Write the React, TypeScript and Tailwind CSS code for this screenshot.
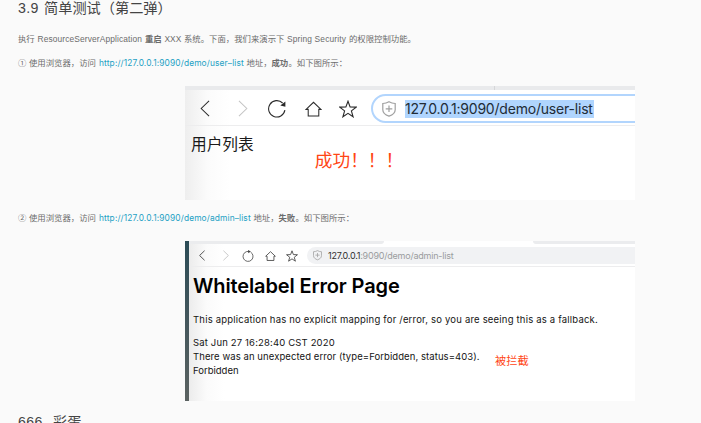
import type { ReactNode } from "react";

const ui = "font-['Inter','Noto_Sans_CJK_SC',sans-serif]";
const prose = "font-['Liberation_Sans','Noto_Sans_CJK_SC',sans-serif]";

function Seg({ className, children }: { className: string; children: ReactNode }) {
  return <span className={`block shrink-0 whitespace-nowrap ${className}`}>{children}</span>;
}

function Back({ className }: { className: string }) {
  return (
    <svg viewBox="0 0 10 18" className={`shrink-0 ${className}`} fill="none" stroke="currentColor" strokeWidth="1.1">
      <path d="M9.3 1 1 9l8.3 8" />
    </svg>
  );
}

function Forward({ className }: { className: string }) {
  return (
    <svg viewBox="0 0 10 18" className={`shrink-0 ${className}`} fill="none" stroke="currentColor" strokeWidth="1.1">
      <path d="M.7 1 9 9 .7 17" />
    </svg>
  );
}

function Reload({ className }: { className: string }) {
  return (
    <svg viewBox="0 0 18 18" className={`shrink-0 ${className}`} fill="none" stroke="currentColor" strokeWidth="1.1">
      <path d="M16.9 10.2A8.2 8.2 0 1 1 14.6 3" />
      <path d="M17.4 1.6v5.2l-5.1-1.3z" fill="currentColor" stroke="none" />
    </svg>
  );
}

function ReloadSmall({ className }: { className: string }) {
  return (
    <svg viewBox="0 0 12 12" className={`shrink-0 ${className}`} fill="none" stroke="currentColor" strokeWidth="0.8">
      <path d="M8.600 2.100A5 5 0 1 1 4.600 1.600L7 1.400" />
      <path d="M6 0 8.800 1.500 6.300 3.300z" fill="currentColor" stroke="none" />
    </svg>
  );
}

function Home({ className }: { className: string }) {
  return (
    <svg viewBox="0 0 18 16" className={`shrink-0 ${className}`} fill="none" stroke="currentColor" strokeWidth="1.1">
      <path d="M3.4 8.4H1.1L9 .9l7.9 7.5h-2.3v6.9H3.4z" />
    </svg>
  );
}

function Star({ className }: { className: string }) {
  return (
    <svg viewBox="0 0 18 18" className={`shrink-0 ${className}`} fill="none" stroke="currentColor" strokeWidth="1.1">
      <path d="M9 1.2 11.1 6.900 17.200 7.100 12.400 10.900 14.100 16.800 9 13.300 3.900 16.800 5.600 10.900.8 7.100 6.900 6.900z" />
    </svg>
  );
}

function Shield({ className }: { className: string }) {
  return (
    <svg viewBox="0 0 14 16" className={`shrink-0 ${className}`} fill="none" stroke="currentColor" strokeWidth="1.2">
      <path d="M7 .8c2 1.2 4 1.7 6.2 1.7v6.2c0 3.400-3 5.300-6.200 6.400C3.800 14 .8 12.100.8 8.700V2.500C3 2.500 5 2 7 .8z" />
      <path d="M7 4.500v6.500M3.700 7.800h6.600" />
    </svg>
  );
}

function SuccessShot() {
  return (
    <div className={`ml-[167px] flex h-[114px] w-[450px] flex-col overflow-hidden bg-white bg-linear-to-r from-[#eeeeee] via-[#fbfbfb] via-5% to-white to-10% ${ui}`}>
      <div className="flex h-1 shrink-0 bg-[#e9eaec]">
        <div className="ml-[309px] w-px bg-[#d5d6d8]" />
      </div>
      <div className="flex h-[36px] shrink-0 items-center border-b border-[#ededee] pt-[2px] text-[#2b2b2b]">
        <Back className="ml-[15px] h-[17px] w-[10px]" />
        <Forward className="ml-[28px] h-[17px] w-[10px] text-[#c4c4c4]" />
        <Reload className="ml-[20px] h-[18px] w-[18px]" />
        <Home className="ml-[19px] h-[16px] w-[17px]" />
        <Star className="ml-[17px] h-[18px] w-[18px]" />
        <div className="ml-[14px] flex h-[29px] w-[280px] shrink-0 items-center rounded-l-full border-2 border-[#b2d5fd] pl-[9px]">
          <Shield className="h-[16px] w-[14px] text-[#a0a0a0]" />
          <Seg className="ml-[9px] h-[18px] w-[188.500px] bg-[#b0d5fe] text-[14px] leading-[18px] tracking-[-0.200px] text-[#222c36]">
            127.0.0.1:9090/demo/user-list
          </Seg>
        </div>
      </div>
      <div className="flex">
        <Seg className="ml-[6px] mt-[8px] text-[15.700px] leading-[22px] text-[#1a1a1a]">用户列表</Seg>
        <Seg className="ml-[61px] mt-[22px] text-[17.700px] leading-[26px] text-[#ff4514]">成功！！！</Seg>
      </div>
    </div>
  );
}

function ForbiddenShot() {
  return (
    <div className={`ml-[167px] flex h-[160px] w-[450px] overflow-hidden bg-white ${ui}`}>
      <div className="w-[4px] shrink-0 bg-linear-to-b from-[#2b4b56] to-[#5b6261]" />
      <div className="flex min-w-0 grow flex-col bg-linear-to-r from-[#ececec] via-[#fbfbfb] via-4% to-white to-8%">
        <div className="flex h-[3px] shrink-0 justify-between">
          <div className="w-[195px] rounded-br-[3px] bg-[#ebecee]" />
          <div className="w-[102px] rounded-bl-[3px] bg-[#ebecee]" />
        </div>
        <div className="flex h-[23px] shrink-0 items-center border-b border-[#ededee] pt-px text-[#444]">
          <Back className="ml-[10px] h-[11px] w-[6px] stroke-[1.500px]" />
          <Forward className="ml-[18px] h-[11px] w-[6px] stroke-[1.500px] text-[#c4c4c4]" />
          <ReloadSmall className="ml-[13px] h-[12px] w-[12px]" />
          <Home className="ml-[11px] h-[10px] w-[11px] stroke-[1.400px]" />
          <Star className="ml-[10px] h-[12px] w-[12px] stroke-[1.300px]" />
          <div className="ml-[9px] flex h-[17px] w-[340px] shrink-0 items-center rounded-l-full bg-[#f1f2f4] pl-[6px]">
            <Shield className="h-[10.500px] w-[9px] text-[#a0a0a0]" />
            <Seg className="ml-[6px] text-[9px] leading-[14px] tracking-[-0.220px] text-[#9a9c9e]">
              <span className="text-[#303030]">127.0.0.1</span>:9090/demo/admin-list
            </Seg>
          </div>
        </div>
        <div className="pl-[4px] text-[9.500px] leading-[14px] text-[#141414]">
          <h1 className="mt-[6px] whitespace-nowrap text-[20px] font-semibold leading-[27px] tracking-[-0.130px] text-black">Whitelabel Error Page</h1>
          <p className="mt-[13px] whitespace-nowrap tracking-[0.195px]">This application has no explicit mapping for /error, so you are seeing this as a fallback.</p>
          <p className="mt-[9px] whitespace-nowrap tracking-[0.155px]">Sat Jun 27 16:28:40 CST 2020</p>
          <div className="flex whitespace-nowrap">
            <p className="w-[302px] tracking-[0.080px]">There was an unexpected error (type=Forbidden, status=403).</p>
            <p className="mt-[4px] h-[9px] text-[11.200px] text-[#ff4514]">被拦截</p>
          </div>
          <p>Forbidden</p>
        </div>
      </div>
    </div>
  );
}

export default function App() {
  return (
    <main className={`h-[423px] w-[701px] overflow-hidden bg-[#fafafa] pl-[18px] text-[8.400px] leading-[14px] text-[#6c6c6c] ${prose}`}>
      <h2 className="flex h-[18px] text-[14.200px] leading-[16px] text-[#444]">
        <Seg className="w-[26px] tracking-[0.300px]">3.9</Seg>
        <Seg className="">简单测试（第二弹）</Seg>
      </h2>
      <p className="mt-[14px] flex h-[14px]">
        <Seg className="w-[19.500px]">执行</Seg>
        <Seg className="w-[107.500px] tracking-[0.120px]">ResourceServerApplication</Seg>
        <Seg className="w-[19.500px] font-bold">重启</Seg>
        <Seg className="w-[19.500px]">XXX</Seg>
        <Seg className="w-[103px]">系统。下面，我们来演示下</Seg>
        <Seg className="w-[62px] tracking-[0.150px]">Spring Security</Seg>
        <Seg className="">的权限控制功能。</Seg>
      </p>
      <p className="mt-[10px] flex h-[14px]">
        <Seg className="w-[11px]">①</Seg>
        <Seg className="w-[70px]">使用浏览器，访问</Seg>
        <Seg className={`w-[147.500px] tracking-[0.130px] text-[#1da1c4] ${ui}`}>http://127.0.0.1:9090/demo/user–list</Seg>
        <Seg className="w-[25px]">地址，</Seg>
        <Seg className="w-[17px] font-bold">成功</Seg>
        <Seg className="">。如下图所示：</Seg>
      </p>
      <div className="mt-[16px]">
        <SuccessShot />
      </div>
      <p className="mt-[11px] flex h-[14px]">
        <Seg className="w-[11px]">②</Seg>
        <Seg className="w-[70px]">使用浏览器，访问</Seg>
        <Seg className={`w-[154.500px] tracking-[0.130px] text-[#1da1c4] ${ui}`}>http://127.0.0.1:9090/demo/admin–list</Seg>
        <Seg className="w-[25px]">地址，</Seg>
        <Seg className="w-[17px] font-bold">失败</Seg>
        <Seg className="">。如下图所示：</Seg>
      </p>
      <div className="mt-[16px]">
        <ForbiddenShot />
      </div>
      <h2 className="mt-[12px] flex h-[18px] text-[14.200px] leading-[18px] text-[#444]">
        <Seg className="w-[35px] tracking-[0.300px]">666.</Seg>
        <Seg className="">彩蛋</Seg>
      </h2>
    </main>
  );
}
